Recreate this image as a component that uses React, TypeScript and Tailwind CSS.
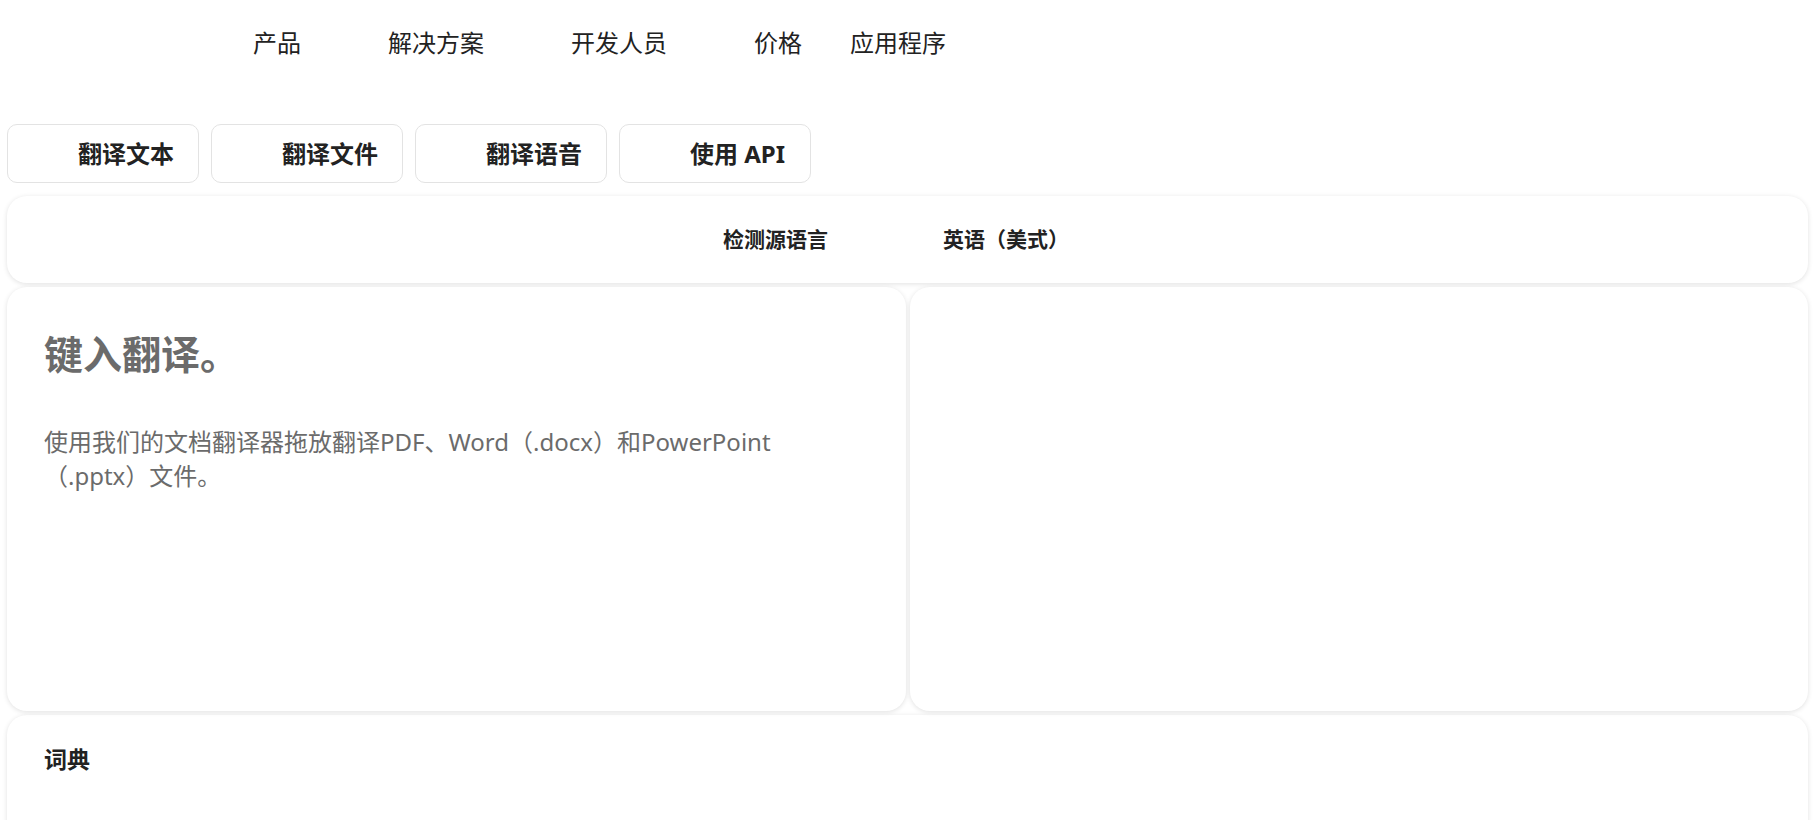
import React from "react";

const navItems = [
  { title: "产品", menu: true },
  { title: "解决方案", menu: true },
  { title: "开发人员", menu: true },
  { title: "价格", menu: false },
  { title: "应用程序", menu: false },
];

const tabs = ["翻译文本", "翻译文件", "翻译语音", "使用 API"];

export default function App() {
  return (
    <div className="min-h-screen bg-white pl-[7px] pr-[9px] text-[#222] font-['Noto_Sans','Noto_Sans_CJK_SC',sans-serif]">
      {/* Top nav */}
      <nav className="flex h-[85px] items-center pl-[246px] text-[24px]">
        {navItems.map((item) => (
          <div key={item.title} className="mr-12 flex items-center">
            <span>{item.title}</span>
            {item.menu && <span className="w-[39px]" />}
          </div>
        ))}
      </nav>

      {/* Mode tabs */}
      <div className="mt-[39px] flex gap-3">
        {tabs.map((tab) => (
          <button
            key={tab}
            className="flex h-[59px] w-[192px] items-center gap-[22px] rounded-[10px] border border-[#e3e3e3] bg-white px-6 text-[24px] font-bold"
          >
            <span className="w-6 shrink-0" />
            <span className="whitespace-nowrap">{tab}</span>
          </button>
        ))}
      </div>

      {/* Language bar */}
      <div className="mt-[13px] grid h-[87px] grid-cols-[1fr_71px_1fr] items-center rounded-[20px] bg-white text-[21px] font-bold shadow-[0_1px_5px_rgba(0,0,0,0.12)]">
        <div className="flex justify-end pr-[44px]">检测源语言</div>
        <div />
        <div className="flex justify-start">英语（美式）</div>
      </div>

      {/* Text panels */}
      <div className="mt-1 grid grid-cols-2 gap-1">
        <div className="h-[424px] rounded-[20px] bg-white px-[37px] pt-[43px] shadow-[0_1px_5px_rgba(0,0,0,0.12)]">
          <h1 className="text-[39px] font-bold leading-[48px] text-[#6b6b6b]">键入翻译。</h1>
          <p className="mt-[47px] text-[24px] leading-[34px] text-[#6b6b6b]">
            使用我们的文档翻译器拖放翻译PDF、Word（.docx）和PowerPoint
            <br />
            （.pptx）文件。
          </p>
        </div>
        <div className="h-[424px] rounded-[20px] bg-white shadow-[0_1px_5px_rgba(0,0,0,0.12)]" />
      </div>

      {/* Dictionary */}
      <div className="mt-1 h-[200px] rounded-[20px] bg-white px-[37px] pt-[28px] shadow-[0_1px_5px_rgba(0,0,0,0.12)]">
        <h2 className="text-[23px] font-bold leading-[32px]">词典</h2>
      </div>
    </div>
  );
}
